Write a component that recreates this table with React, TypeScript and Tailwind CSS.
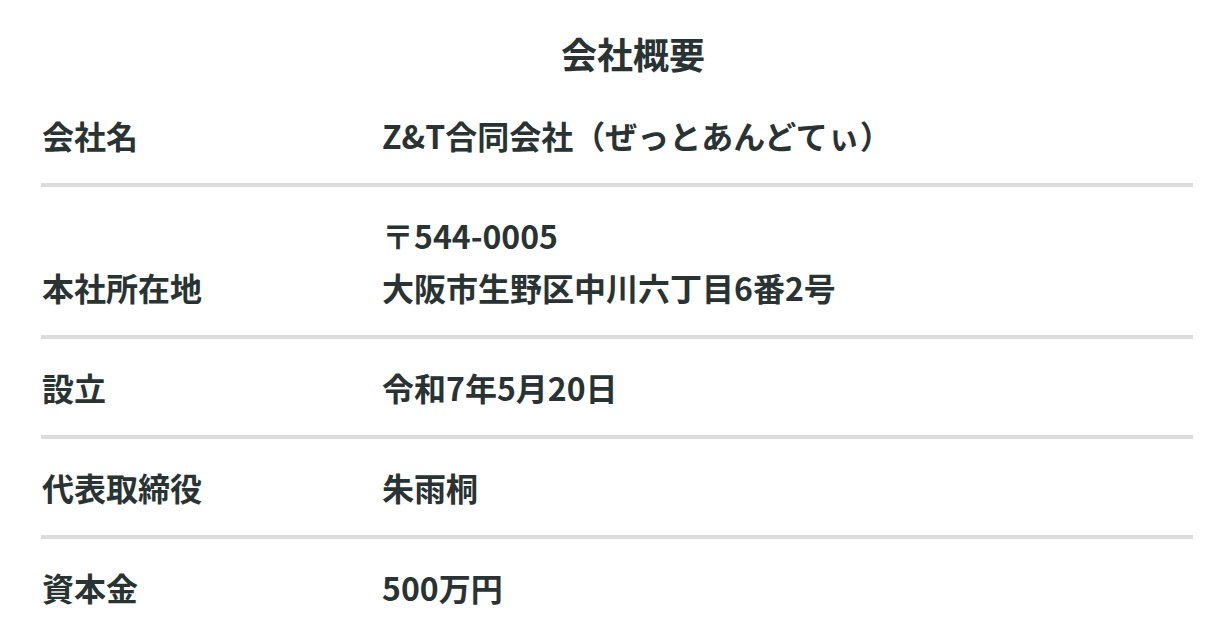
import React from "react";

const rows: { label: string; value: string[] }[] = [
  { label: "会社名", value: ["Z&T合同会社（ぜっとあんどてぃ）"] },
  { label: "本社所在地", value: ["〒544-0005", "大阪市生野区中川六丁目6番2号"] },
  { label: "設立", value: ["令和7年5月20日"] },
  { label: "代表取締役", value: ["朱雨桐"] },
  { label: "資本金", value: ["500万円"] },
];

export default function App() {
  return (
    <div
      className="w-[1228px] h-[623px] overflow-hidden bg-white text-[#2a3333]"
      style={{ fontFamily: '"Noto Sans CJK JP", "Noto Sans", sans-serif' }}
    >
      <div className="ml-[41px] mr-[35px] pt-[27px]">
        <h1 className="text-center pl-[32px] text-[36px] leading-[52px] font-bold">会社概要</h1>
        <div className="mt-[8px]">
          {rows.map((r, i) => (
            <div
              key={i}
              className={`flex items-end py-[22px] ${i < rows.length - 1 ? "border-b-4 border-[#dcdcdc]" : ""}`}
            >
              <div className="w-[341px] shrink-0 pl-[1px] text-[32px] leading-[52px] font-bold">{r.label}</div>
              <div className="text-[32px] leading-[52px] font-bold">
                {r.value.map((v, j) => (
                  <div key={j}>{v}</div>
                ))}
              </div>
            </div>
          ))}
        </div>
      </div>
    </div>
  );
}
